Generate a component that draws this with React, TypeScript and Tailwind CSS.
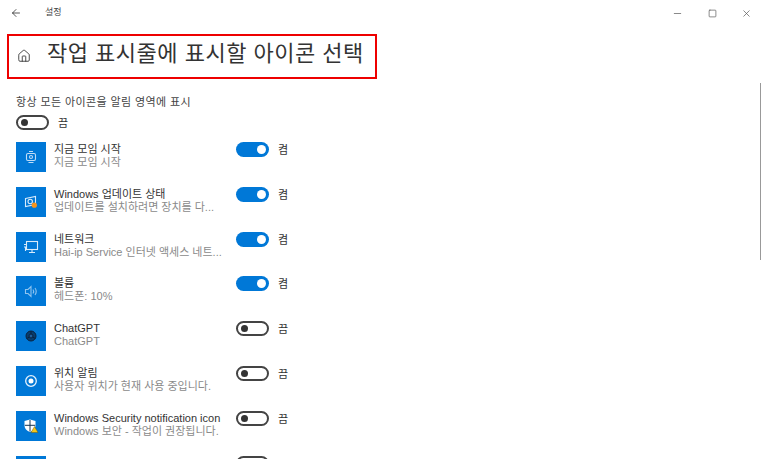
import { ArrowLeft, Home, Minus, Square, X } from "lucide-react";
import type { ReactNode } from "react";

const font = "font-['Liberation_Sans','Noto_Sans_CJK_KR',sans-serif]";

function Toggle({ on }: { on: boolean }) {
  if (on) {
    return (
      <div className="w-[33px] h-[15px] rounded-full bg-[#0078d7] flex items-center justify-end pr-[3px]">
        <div className="w-[9px] h-[9px] rounded-full bg-white" />
      </div>
    );
  }
  return (
    <div className="w-[33px] h-[15px] rounded-full border-2 border-[#444] flex items-center pl-[3px]">
      <div className="w-[7px] h-[7px] rounded-full bg-[#333]" />
    </div>
  );
}

interface Row {
  title: string;
  sub: string;
  on: boolean;
  icon: ReactNode;
}

const rows: Row[] = [
  {
    title: "지금 모임 시작",
    sub: "지금 모임 시작",
    on: true,
    icon: (
      <svg width="14" height="14" viewBox="0 0 14 14" fill="none" stroke="#bfdcf6" strokeWidth="1.1">
        <rect x="2.5" y="3.5" width="9" height="7" rx="1.5" />
        <circle cx="7" cy="7" r="1.5" />
        <path d="M4.5 12.5h5M5 1.5h4" />
      </svg>
    ),
  },
  {
    title: "Windows 업데이트 상태",
    sub: "업데이트를 설치하려면 장치를 다...",
    on: true,
    icon: (
      <svg width="16" height="16" viewBox="0 0 16 16" fill="none">
        <path d="M2.5 4.5l10-2v8l-10 2z" stroke="#d8ebfb" strokeWidth="1.1" />
        <circle cx="7.2" cy="7.5" r="2.2" stroke="#d8ebfb" strokeWidth="1.1" />
        <circle cx="11.3" cy="11.2" r="2.6" fill="#f7941d" />
      </svg>
    ),
  },
  {
    title: "네트워크",
    sub: "Hai-ip Service 인터넷 액세스  네트...",
    on: true,
    icon: (
      <svg width="16" height="16" viewBox="0 0 16 16" fill="none" stroke="#d8ebfb" strokeWidth="1.1">
        <rect x="3.5" y="2.5" width="11" height="8" />
        <path d="M6 13.5h6M9 10.5v3" />
        <path d="M1 5.5h3M1 8h3M2.5 8v4" />
      </svg>
    ),
  },
  {
    title: "볼륨",
    sub: "헤드폰: 10%",
    on: true,
    icon: (
      <svg width="15" height="15" viewBox="0 0 15 15" fill="none" stroke="#8fc4ef" strokeWidth="1.1">
        <path d="M1.5 5.5h2.5l3-3v10l-3-3H1.5z" />
        <path d="M9 5.5c.8 1.2.8 2.8 0 4M11 4c1.4 2 1.4 5 0 7" />
      </svg>
    ),
  },
  {
    title: "ChatGPT",
    sub: "ChatGPT",
    on: false,
    icon: (
      <svg width="14" height="14" viewBox="0 0 14 14" fill="#0b2a4a" stroke="#0a2340" strokeWidth="1">
        <circle cx="7" cy="7" r="5" fillOpacity=".75" />
        <circle cx="7" cy="7" r="2" fill="#1f5f9c" />
        <path d="M7 2v3M2.7 9.5l2.6-1.4M11.3 9.5L8.7 8.1" />
      </svg>
    ),
  },
  {
    title: "위치 알림",
    sub: "사용자 위치가 현재 사용 중입니다.",
    on: false,
    icon: (
      <svg width="14" height="14" viewBox="0 0 14 14" fill="none">
        <circle cx="7" cy="7" r="5.3" stroke="#e6f2fc" strokeWidth="1.3" />
        <circle cx="7" cy="7" r="2.5" fill="#ffffff" />
      </svg>
    ),
  },
  {
    title: "Windows Security notification icon",
    sub: "Windows 보안 - 작업이 권장됩니다.",
    on: false,
    icon: (
      <svg width="16" height="16" viewBox="0 0 16 16">
        <path d="M7 1.5l5.5 1.6v4.6c0 3-2.3 5.2-5.5 6.3-3.2-1.1-5.5-3.3-5.5-6.3V3.1z" fill="#fff" />
        <path d="M7 2v11.5M1.8 7.3h10.4" stroke="#17324f" strokeWidth="1" />
        <path d="M11.5 8.5l3.5 6h-7z" fill="#f5c518" stroke="#5c4a00" strokeWidth=".4" />
      </svg>
    ),
  },
];

export default function App() {
  return (
    <div className={`${font} relative w-[765px] h-[463px] overflow-hidden bg-white text-[#222]`}>
      {/* title bar */}
      <div className="h-[26px] flex items-center">
        <ArrowLeft className="ml-[10px] w-[12px] h-[12px] text-[#222]" strokeWidth={1.5} />
        <span className="ml-[23px] text-[9px] text-[#444]">설정</span>
        <div className="ml-auto flex items-center gap-[24.5px] pr-[13px] text-[#555]">
          <Minus className="w-[11px] h-[11px]" strokeWidth={1.5} />
          <Square className="w-[9px] h-[9px]" strokeWidth={1.8} />
          <X className="w-[11px] h-[11px]" strokeWidth={1.5} />
        </div>
      </div>

      {/* heading */}
      <div className="ml-[7px] mt-[8px] w-[370px] h-[45px] border-2 border-[#ee0000] flex items-center">
        <Home className="ml-[8px] mb-[2px] w-[14px] h-[14px] text-[#333]" strokeWidth={1.5} />
        <h1 className="ml-[16px] mb-[6px] text-[22px] leading-[26px] font-normal text-[#333] tracking-[0.5px]">
          작업 표시줄에 표시할 아이콘 선택
        </h1>
      </div>

      <div className="ml-[16px] mt-[16px] text-[11px] leading-[14px] text-[#444] tracking-[0.4px]">
        항상 모든 아이콘을 알림 영역에 표시
      </div>
      <div className="ml-[16px] mt-[6px] flex items-center h-[15px]">
        <Toggle on={false} />
        <span className="ml-[9px] mt-[2px] text-[11px] leading-[15px] text-[#333]">끔</span>
      </div>

      {/* icon rows, the list is cut off at the lower edge of the pane */}
      <div className="ml-[16px] mt-[12px] h-[317px] overflow-hidden flex flex-col gap-[14.8px]">
        {rows.map((r) => (
          <div key={r.title} className="flex h-[30px] shrink-0">
            <div className="w-[30px] h-[30px] bg-[#0078d7] flex items-center justify-center shrink-0">{r.icon}</div>
            <div className="ml-[8px] w-[182px] pt-[1px] text-[11px] leading-[13px] whitespace-nowrap">
              <div className="text-[#333]">{r.title}</div>
              <div className="text-[#8a8a8a]">{r.sub}</div>
            </div>
            <div className="flex items-start">
              <Toggle on={r.on} />
              <span className="ml-[9px] mt-[1px] text-[11px] leading-[15px] text-[#333]">{r.on ? "켬" : "끔"}</span>
            </div>
          </div>
        ))}
        <div className="flex h-[30px] shrink-0">
          <div className="w-[30px] h-[30px] bg-[#0078d7] shrink-0" />
          <div className="ml-[190px]">
            <Toggle on={false} />
          </div>
        </div>
      </div>

      {/* scrollbar */}
      <div className="absolute left-[760px] top-[83px] w-px h-[177px] bg-[#999]" />
    </div>
  );
}
